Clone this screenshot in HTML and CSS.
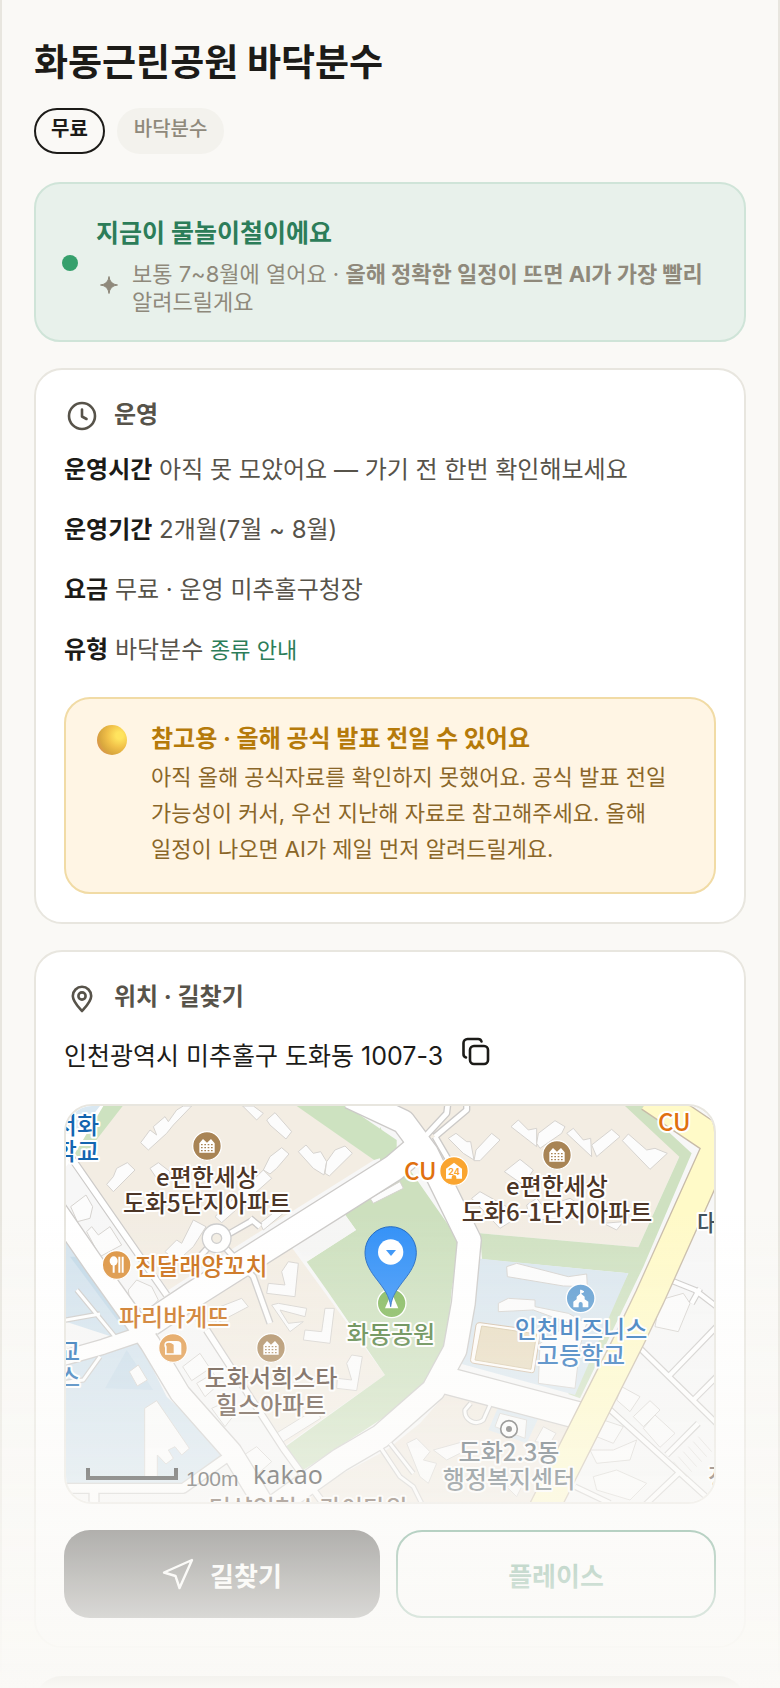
FILE: index.html
```html
<!DOCTYPE html>
<html lang="ko">
<head>
<meta charset="utf-8">
<meta name="viewport" content="width=device-width, initial-scale=1">
<title>화동근린공원 바닥분수</title>
<link rel="stylesheet" href="styles.css">
</head>
<body>
<main class="page">
  <h1 class="title">화동근린공원 바닥분수</h1>
  <div class="chips">
    <span class="chip chip-strong">무료</span>
    <span class="chip">바닥분수</span>
  </div>

  <section class="season">
    <span class="season-dot"></span>
    <div class="season-body">
      <h2 class="season-title">지금이 물놀이철이에요</h2>
      <div class="season-note">
        <svg class="spark" viewBox="0 0 18 18" aria-hidden="true"><path d="M9 0.500Q9.800 8.200 17.500 9Q9.800 9.800 9 17.500Q8.200 9.800 0.500 9Q8.200 8.200 9 0.500Z" fill="#8f897b" stroke="#8f897b" stroke-width="1"/></svg>
        <p>보통 7~8월에 열어요 · <b>올해 정확한 일정이 뜨면 AI가 가장 빨리</b> 알려드릴게요</p>
      </div>
    </div>
  </section>

  <section class="card">
    <h2 class="card-head">
      <svg class="head-icon" viewBox="0 0 36 36" aria-hidden="true"><circle cx="18" cy="18" r="13"/><path d="M18 11.500V18.500L22.500 21"/></svg>
      운영
    </h2>
    <div class="facts">
      <p><b>운영시간</b> 아직 못 모았어요 — 가기 전 한번 확인해보세요</p>
      <p><b>운영기간</b> 2개월(7월 ~ 8월)</p>
      <p><b>요금</b> 무료 · 운영 미추홀구청장</p>
      <p><b>유형</b> 바닥분수 <a class="guide" href="#types">종류 안내</a></p>
    </div>
    <div class="notice">
      <span class="orb"></span>
      <div>
        <h3 class="notice-title">참고용 · 올해 공식 발표 전일 수 있어요</h3>
        <p class="notice-text">아직 올해 공식자료를 확인하지 못했어요. 공식 발표 전일 가능성이 커서, 우선 지난해 자료로 참고해주세요. 올해 일정이 나오면 AI가 제일 먼저 알려드릴게요.</p>
      </div>
    </div>
  </section>

  <section class="card">
    <h2 class="card-head">
      <svg class="head-icon" viewBox="0 0 36 36" aria-hidden="true"><path d="M18 31C14 26.500 8.800 21.500 8.800 16a9.200 9.200 0 0 1 18.400 0C27.200 21.500 22 26.500 18 31Z"/><circle cx="18" cy="16" r="3.600"/></svg>
      위치 · 길찾기
    </h2>
    <div class="address">
      <span>인천광역시 미추홀구 도화동 1007-3</span>
      <button class="copy" type="button" aria-label="주소 복사">
        <svg viewBox="0 0 30 30" aria-hidden="true"><rect x="9" y="9" width="18" height="18" rx="4"/><path d="M5 20.500A3.500 3.500 0 0 1 2.500 17V6A4 4 0 0 1 6.500 2H17A3.500 3.500 0 0 1 20.500 4.500"/></svg>
      </button>
    </div>
    <div class="map">
      <svg viewBox="0 0 648 396" preserveAspectRatio="xMidYMid slice" role="img" aria-label="화동공원 주변 지도">
        <g transform="translate(-16 -16) scale(.33333)">
          <rect x="0" y="0" width="2100" height="1300" fill="#f7f7f7"/>
          <path d="M48 48H190L48 230Z" fill="#fff"/>
          <path d="M85 48H150L85 130H48V90Z" fill="#d9e8f2"/>
          <path d="M160 48H225L100 225 75 190Z" fill="#cde2c0"/>
          <path d="M218 48H745L972 210 550 475 355 600 85 220Z" fill="#f3ede3"/>
          <path d="M740 48H890L1040 150V190L972 210Z" fill="#cde2c0"/>
          <path d="M48 420L150 560 245 725 200 745 48 695Z" fill="#d3e3ee"/>
          <path d="M48 790L160 785 270 750 290 800 350 920 525 1080V1110L400 1180H48Z" fill="#d3e3ee"/>
          <path d="M230 780L310 900 165 895Z" fill="#c8dcea"/>
          <path d="M60 500L90 500 215 690 205 695Z" fill="#c2d9e8"/>
          <path d="M720 465L1005 855 700 1070 465 715 380 655Z" fill="#f3ede3"/>
          <path d="M875 360L1080 240 1230 455 1205 600 1190 770 1120 900 990 990 890 1055 760 1140 700 1075 1005 855 830 600 770 515 918 420Z" fill="#cde0be"/>
          <path d="M730 460L875 360 918 420 770 515Z" fill="#f6f6f5"/>
          <path d="M760 1240L860 1160 1010 1080 1110 1000 1190 910 1330 940 1560 1010 1440 1240Z" fill="#f1eae0"/>
          <path d="M1030 48H1740L1890 195 1765 472 1290 430 1150 150Z" fill="#f3ede3"/>
          <path d="M1725 48H1800L1860 130 1925 190 1780 530 1590 925 1555 912 1735 550 1296 508 1290 430 1765 472 1888 200Z" fill="#cfe1c1"/>
          <path d="M1280 505L1735 550 1575 915 1235 822 1262 650Z" fill="#dbe7ef"/>
          <path d="M1015 165L1040 200 1035 220 990 215 990 110Z" fill="#cde2c0"/>
          <path d="M1345 950L1465 985 1430 1060 1315 1020Z" fill="#dbe7ef"/>

          <g class="building">
            <path d="M272 158L300 120 320 135 310 110 345 80 355 95 380 60 400 48H425L370 105 350 130 295 180Z"/>
            <path d="M578 48H610L640 70 620 90Z"/>
            <path d="M650 90L675 68 725 125 708 147 660 105Z"/>
            <path d="M640 240L660 200 695 173 717 192 680 235 660 252Z"/>
            <path d="M745 185L768 165 790 190 812 185 830 215 822 255 790 235Z"/>
            <path d="M830 215L855 180 885 168 907 190 838 258 825 250Z"/>
            <path d="M170 283L190 260 200 235 232 218 255 240 190 305Z"/>
            <path d="M300 235L325 218 360 245 350 280 320 265Z"/>
            <path d="M495 380L640 240 665 265 515 398Z"/>
            <path d="M345 485L380 450 395 460 430 390 468 410 430 470 380 515Z"/>
            <path d="M630 400L700 345 712 360 640 420Z"/>
            <path d="M62 350L108 315 128 350 120 385 82 395Z"/>
            <path d="M110 425L125 410 145 435 180 410 215 465 150 500Z"/>
            <path d="M235 600L260 570 305 590 325 630 290 665 240 640Z"/>
            <path d="M695 545L715 515 745 520 735 620 650 610 655 580 705 585Z"/>
            <path d="M665 645L685 640 770 655 765 680 690 660 715 700 760 695 720 725Z"/>
            <path d="M825 655H853L840 760 760 750 765 720 815 725Z"/>
            <path d="M890 820L905 795 937 800 920 902 860 895 862 865 905 870Z"/>
            <path d="M398 830L450 790 480 835 425 872Z"/>
            <path d="M485 660L575 625 595 650 500 700Z"/>
            <path d="M440 880L490 850 510 880 465 920Z"/>
            <path d="M485 955L540 930 560 965 525 1010Z"/>
            <path d="M238 845L265 825 292 870 262 888Z"/>
            <path d="M284 955L320 932 418 1075 395 1095 375 1070 355 1080 370 1105 348 1122 322 1095V1160H284Z"/>
            <path d="M582 1095L620 1070 665 1115 625 1150Z"/>
            <path d="M678 1030L800 955 812 985 700 1055Z"/>
            <path d="M1195 145L1218 130 1250 155 1262 155 1272 210 1240 190Z"/>
            <path d="M1278 180L1325 130 1350 150 1290 212 1272 212Z"/>
            <path d="M1383 110L1405 90 1435 120 1460 115 1460 170Z"/>
            <path d="M1465 130L1515 92 1545 110 1535 130 1470 175 1460 160Z"/>
            <path d="M1550 130L1570 115 1600 150 1622 145 1625 200Z"/>
            <path d="M1625 165L1685 118 1710 140 1640 200Z"/>
            <path d="M1717 152L1735 132 1790 180 1815 175 1852 190 1800 238Z"/>
            <path d="M1363 245L1410 208 1450 240 1420 285Z"/>
            <path d="M1265 325L1290 305 1370 350 1390 390 1350 415Z"/>
            <path d="M1430 345L1460 325 1480 350 1560 325 1600 350 1590 385 1440 390Z"/>
            <path d="M1660 400L1720 395 1700 420Z"/>
            <path d="M960 325L1050 275 1060 295 970 340Z"/>
            <path d="M1370 530L1400 520 1555 560 1610 552 1612 590 1540 588 1372 560Z"/>
            <path d="M1345 640L1375 625 1455 630 1455 650 1555 670 1610 700 1590 770 1575 895 1465 880 1470 760 1560 700 1450 660 1345 665Z"/>
            <path d="M1350 970L1430 990 1425 1045 1335 1010Z"/>
            <path d="M1480 1010L1518 1030 1500 1060 1455 1055Z"/>
            <path d="M1815 710L1830 630 1900 610 1920 640 1885 725Z"/>
            <path d="M1700 930L1715 890 1770 920 1740 965Z"/>
            <path d="M1750 980L1800 932 1830 960 1780 1010ZM1780 1015L1815 975 1875 1030 1830 1072Z"/>
            <path d="M1660 990L1720 1010 1690 1060 1640 1040ZM1690 1080L1760 1050 1740 1110 1640 1120 1620 1080Z"/>
            <path d="M1630 1160L1700 1140 1790 1180 1740 1230 1640 1200Z"/>
            <path d="M1070 1060L1100 1045 1140 1085 1120 1110 1160 1120 1135 1180 1110 1160ZM1150 1080L1240 1055 1250 1080 1190 1110Z"/>
            <path d="M1370 1190L1420 1180 1400 1220Z"/>
          </g>

          <g class="road-edge">
            <path d="M65 205L350 615M470 720L700 1075 820 1240" stroke-width="24"/>
            <path d="M20 360L130 520 230 660 300 760 390 910 545 1085 640 1240" stroke-width="66"/>
            <path d="M20 810L160 770 285 728 440 615" stroke-width="50"/>
            <path d="M20 695L150 672M80 600L195 740M20 880L100 870 150 800" stroke-width="16"/>
            <path d="M20 1195H400L520 1110 550 1090M132 1200V1260" stroke-width="34"/>
            <path d="M300 700L420 620 1030 235 1130 150" stroke-width="84"/>
            <path d="M500 445L540 430 610 390M500 445L560 510 610 560 660 700M500 445L440 510M600 385L630 410" stroke-width="22"/>
            <path d="M900 20L1060 95 1130 190 1258 450 1240 640 1215 780 1150 900 990 1040 870 1110 660 1260" stroke-width="76"/>
            <path d="M1190 872L1620 985" stroke-width="86"/>
            <path d="M1125 140L1190 70 1195 30M1155 140L1250 60V30M1155 140L1225 260" stroke-width="22"/>
            <path d="M990 1070L1050 1160 1090 1190 1120 1250M1020 1060L1090 1150M1320 945L1300 990A34 34 0 0 1 1245 960L1262 940" stroke-width="16"/>
            <path d="M1670 950L1990 1240M1760 765L2000 1000M1860 855L2000 710M1930 930L2000 860M1860 570L1935 600 2000 650M1925 640L1950 595M1575 1190L1680 1240M1850 1095L1945 1000M1780 1250L1885 1150" stroke-width="20"/>
          </g>
          <g class="road-fill">
            <path d="M65 205L350 615M470 720L700 1075 820 1240" stroke-width="17"/>
            <path d="M20 360L130 520 230 660 300 760 390 910 545 1085 640 1240" stroke-width="58"/>
            <path d="M20 810L160 770 285 728 440 615" stroke-width="42"/>
            <path d="M20 695L150 672M80 600L195 740M20 880L100 870 150 800" stroke-width="9"/>
            <path d="M20 1195H400L520 1110 550 1090M132 1200V1260" stroke-width="26"/>
            <path d="M300 700L420 620 1030 235 1130 150" stroke-width="76"/>
            <path d="M500 445L540 430 610 390M500 445L560 510 610 560 660 700M500 445L440 510M600 385L630 410" stroke-width="14"/>
            <path d="M900 20L1060 95 1130 190 1258 450 1240 640 1215 780 1150 900 990 1040 870 1110 660 1260" stroke-width="68"/>
            <path d="M1190 872L1620 985" stroke-width="78"/>
            <path d="M1125 140L1190 70 1195 30M1155 140L1250 60V30M1155 140L1225 260" stroke-width="14"/>
            <path d="M990 1070L1050 1160 1090 1190 1120 1250M1020 1060L1090 1150M1320 945L1300 990A34 34 0 0 1 1245 960L1262 940" stroke-width="9"/>
            <path d="M1670 950L1990 1240M1760 765L2000 1000M1860 855L2000 710M1930 930L2000 860M1860 570L1935 600 2000 650M1925 640L1950 595M1575 1190L1680 1240M1850 1095L1945 1000M1780 1250L1885 1150" stroke-width="13"/>
          </g>
          <path class="road-main-edge" d="M1800 20L2030 175M2020 130L1800 620 1740 745 1475 1270" stroke-width="94"/>
          <path class="road-main" d="M1800 20L2030 175M2020 130L1800 620 1740 745 1475 1270" stroke-width="86"/>
          <circle cx="500" cy="445" r="28" fill="none" stroke="#ccc" stroke-width="34"/>
          <circle cx="500" cy="445" r="28" fill="none" stroke="#fff" stroke-width="26"/>
          <circle cx="500" cy="445" r="15" fill="#f3ede3" stroke="#ccc" stroke-width="4"/>
          <g stroke="#d8d5d0" stroke-width="2.500"><path d="M1870 1115L1910 1160M1885 1100L1925 1145M1900 1085L1940 1130M1915 1070L1955 1115M1930 1055L1970 1100M1945 1040L1985 1085"/></g>
          <path d="M1290 698L1465 722Q1472 724 1471 730L1453 842Q1452 850 1444 848L1272 820Q1260 818 1262 808L1278 705Q1280 697 1290 698Z" fill="#fffdfa" stroke="#d2bca4" stroke-width="3"/>
          <path d="M1295 708L1460 732 1443 838 1275 810Z" fill="#e8dcc0" stroke="#d8c8a8" stroke-width="3"/>

          <g stroke="#fff" stroke-width="4">
            <circle cx="471" cy="168" r="43" fill="#a88455"/>
            <circle cx="1521" cy="195" r="43" fill="#a88455"/>
            <circle cx="663" cy="774" r="43" fill="#a88455"/>
            <circle cx="1212" cy="243" r="43" fill="#faa530"/>
            <circle cx="200" cy="525" r="43" fill="#dc913c"/>
            <circle cx="369" cy="774" r="43" fill="#e09440"/>
            <circle cx="1592" cy="625" r="43" fill="#5b9bd1"/>
            <circle cx="1025" cy="640" r="43" fill="#7fb757"/>
          </g>
          <g id="apt"><path d="M448 188V160L459 147 471 158 483 147 494 160V188Z" fill="#fff"/><path d="M453 164H490M453 173H490M453 182H490" stroke="#a88455" stroke-width="4" stroke-dasharray="5 5"/></g>
          <use href="#apt" x="1050" y="27"/>
          <use href="#apt" x="192" y="606"/>
          <path d="M1188 236L1212 218 1236 236V266H1219V262A7 7 0 0 0 1205 262V266H1188Z" fill="#fff"/>
          <ellipse cx="191" cy="513" rx="12" ry="14" fill="#fff"/><path d="M191 520V548M208 500V548M218 500V548" stroke="#fff" stroke-width="6"/>
          <path d="M343 765Q343 753 358 753H380Q396 753 394 768V794H345V773Q343 770 343 765Z" fill="#fff"/><path d="M347 762Q358 754 371 764V790H350V770Z" fill="#e09440"/>
          <path d="M1592 612V600L1602 605 1592 610" fill="#fff" stroke="#fff" stroke-width="3"/><path d="M1570 652V635L1580 628V620L1592 610 1604 620V628L1615 635V652H1598V642A6 6 0 0 0 1586 642V652Z" fill="#fff"/>
          <path d="M1025 608L1045 655H1005Z" fill="#fff"/>
          <path d="M1022 650C1016 585 945 555 945 487A77 77 0 0 1 1099 487C1099 555 1028 585 1022 650Z" fill="#2f8ff8" stroke="#1b64c0" stroke-width="3"/>
          <circle cx="1022" cy="486" r="38" fill="#fff"/><path d="M1008 480H1038L1023 498Z" fill="#2f8ff8"/>
          <circle cx="1377" cy="1017" r="25" fill="#fff" stroke="#545454" stroke-width="5"/><circle cx="1377" cy="1017" r="9" fill="#545454"/>
          <path d="M114 1134V1164H378V1134" fill="none" stroke="#111" stroke-width="12"/>
        </g>
        <g class="label">
          <g class="blue-deep" text-anchor="end"><text x="33" y="28">서화</text><text x="33" y="54">학교</text><text x="14" y="254">교</text><text x="14" y="280">스</text></g>
          <g class="brown" text-anchor="middle"><text x="141" y="80">e편한세상</text><text x="141" y="106">도화5단지아파트</text><text x="491" y="89">e편한세상</text><text x="491" y="115">도화6-1단지아파트</text><text x="205" y="281">도화서희스타</text><text x="205" y="308">힐스아파트</text><text x="242" y="411">더샵인천스카이타워</text><text x="653" y="380">정</text></g>
          <g class="orange"><text x="69" y="169">진달래양꼬치</text><text x="53" y="220">파리바게뜨</text></g>
          <g class="orange-cu"><text x="338" y="74">CU</text><text x="592" y="25">CU</text></g>
          <g class="green" text-anchor="middle"><text x="325" y="237">화동공원</text></g>
          <g class="blue" text-anchor="middle"><text x="515" y="232">인천비즈니스</text><text x="515" y="258">고등학교</text></g>
          <g class="slate" text-anchor="middle"><text x="443" y="355">도화2.3동</text><text x="443" y="382">행정복지센터</text><text x="642" y="126">대</text></g>
        </g>
        <text class="scale" x="120" y="380">100m</text>
        <text class="brand" x="187" y="378">kakao</text>
        <text class="cu24" x="388" y="69" text-anchor="middle">24</text>
      </svg>
    </div>
    <div class="actions">
      <button class="btn btn-dark" type="button">
        <svg viewBox="0 0 32 32" aria-hidden="true"><path d="M30 2L2 14.500 13.500 18 17.500 30Z"/></svg>
        길찾기
      </button>
      <button class="btn btn-line" type="button">플레이스</button>
    </div>
  </section>
  <section class="card-next"></section>
</main>
<div class="fade"></div>
</body>
</html>
```
FILE: styles.css
```css
* { box-sizing: border-box; }
body {
  margin: 0;
  background: #faf9f6;
  color: #1c1b18;
  font-family: Inter, "Noto Sans CJK KR", sans-serif;
  font-size: 24px;
}
h1, h2, h3, p { margin: 0; }
button { font: inherit; color: inherit; cursor: pointer; }

.page {
  height: 100vh;
  overflow: hidden;
  padding: 36px 32px 0;
  border: solid #e8e6df;
  border-width: 0 2px;
}
.title { font-size: 37px; line-height: 54px; font-weight: 700; }

.chips { display: flex; gap: 12px; margin: 18px 0 28px; }
.chip {
  height: 46px;
  padding: 4px 15px;
  border: 2px solid #f3f2ed;
  border-radius: 23px;
  background: #f3f2ed;
  color: #8f897b;
  font-size: 20px;
  line-height: 30px;
  font-weight: 500;
}
.chip-strong { border-color: #1c1b18; background: #faf9f6; color: #1c1b18; font-weight: 700; }

.season {
  display: flex;
  align-items: center;
  gap: 18px;
  padding: 26px 26px 24px;
  border: 2px solid #cfe4d8;
  border-radius: 26px;
  background: #e8f1eb;
}
.season-dot { flex: none; width: 16px; height: 16px; border-radius: 50%; background: #36a06c; }
.season-title { font-size: 25px; line-height: 46px; font-weight: 700; color: #2c7d59; }
.season-note { display: flex; align-items: center; gap: 14px; margin-top: 4px; color: #8f897b; font-size: 22px; line-height: 28px; }
.season-note p { word-break: keep-all; }
.spark { flex: none; width: 18px; height: 18px; margin: 0 0 6px 4px; }

.card { margin-top: 26px; padding: 28px; border: 2px solid #e8e6df; border-radius: 28px; background: #fff; }
.card-head { display: flex; gap: 14px; height: 36px; font-size: 24px; line-height: 34px; font-weight: 700; color: #57534a; }
.head-icon { width: 36px; height: 36px; fill: none; stroke: #57534a; stroke-width: 2.6; stroke-linecap: round; stroke-linejoin: round; }

.facts { display: grid; gap: 20px; margin: 16px 0 27px; color: #57534a; line-height: 40px; }
.facts b { color: #1c1b18; }
.guide { font-size: 22px; color: #2c7d59; text-decoration: none; }

.notice { display: flex; gap: 24px; padding: 20px 28px 25px 31px; border: 2px solid #f1dba5; border-radius: 26px; background: #fff5e4; word-break: keep-all; }
.orb {
  flex: none;
  width: 30px;
  height: 30px;
  margin-top: 6px;
  border-radius: 50%;
  background: radial-gradient(circle at 75% 35%, #ffe45e 12%, #f0bf48 42%, #d9a83e 65%, #dc7a5c 100%);
}
.notice-title { font-size: 24px; line-height: 40px; font-weight: 700; color: #b57a0a; }
.notice-text { font-size: 22px; line-height: 36px; color: #8a6628; }

.address { display: flex; align-items: center; gap: 18px; margin: 20px 0 28px; font-size: 25px; line-height: 40px; }
.copy { display: flex; padding: 0 0 8px; border: 0; background: none; }
.copy svg { width: 30px; height: 30px; fill: none; stroke: #1c1b18; stroke-width: 2.6; stroke-linecap: round; }

.map { height: 400px; overflow: hidden; border: 2px solid #e8e6df; border-radius: 28px; }
.map svg { display: block; width: 100%; height: 100%; }
.road-edge, .road-fill, .road-main-edge, .road-main { fill: none; stroke-linejoin: round; }
.road-edge { stroke: #cccac8; }
.road-fill { stroke: #fff; }
.road-main-edge { stroke: #c8bba8; }
.road-main { stroke: #fffac8; }
.building { fill: #fcfcfc; stroke: #d6d3cf; stroke-width: 3; }
.label { font-family: "Noto Sans CJK KR", sans-serif; font-size: 24px; font-weight: 500; stroke: #fff; stroke-width: 4px; stroke-linejoin: round; paint-order: stroke; }
.blue-deep { fill: #1465b0; }
.blue { fill: #1f6cb8; }
.brown { fill: #4c3526; }
.orange { fill: #c96a0d; }
.orange-cu { fill: #e0700f; }
.green { fill: #4a7a35; }
.slate { fill: #3f4f58; }
.scale { font-family: "Liberation Sans", sans-serif; font-size: 21px; fill: #222; }
.brand { font-family: "Noto Sans", sans-serif; font-size: 25px; font-weight: 400; fill: #111; }
.cu24 { font-size: 9px; font-weight: 700; fill: #faa530; }

.actions { display: grid; grid-template-columns: 316fr 320fr; gap: 16px; margin-top: 26px; }
.btn { display: flex; align-items: center; justify-content: center; gap: 16px; height: 88px; border: 0; border-radius: 26px; font-size: 26px; font-weight: 700; }
.btn svg { width: 32px; height: 32px; fill: none; stroke: #fff; stroke-width: 2.4; stroke-linejoin: round; }
.btn-dark { background: #1c1b18; color: #fff; }
.btn-line { border: 2px solid #2c7d59; background: #fff; color: #2c7d59; }

.card-next { position: relative; z-index: 1; height: 60px; margin-top: 28px; border-radius: 28px; background: linear-gradient(#f3f2ee, #faf9f6 14px); }
.fade { position: fixed; inset: auto 0 0; height: 480px; background: linear-gradient(rgba(250, 249, 246, 0), #faf9f6); pointer-events: none; }
```
